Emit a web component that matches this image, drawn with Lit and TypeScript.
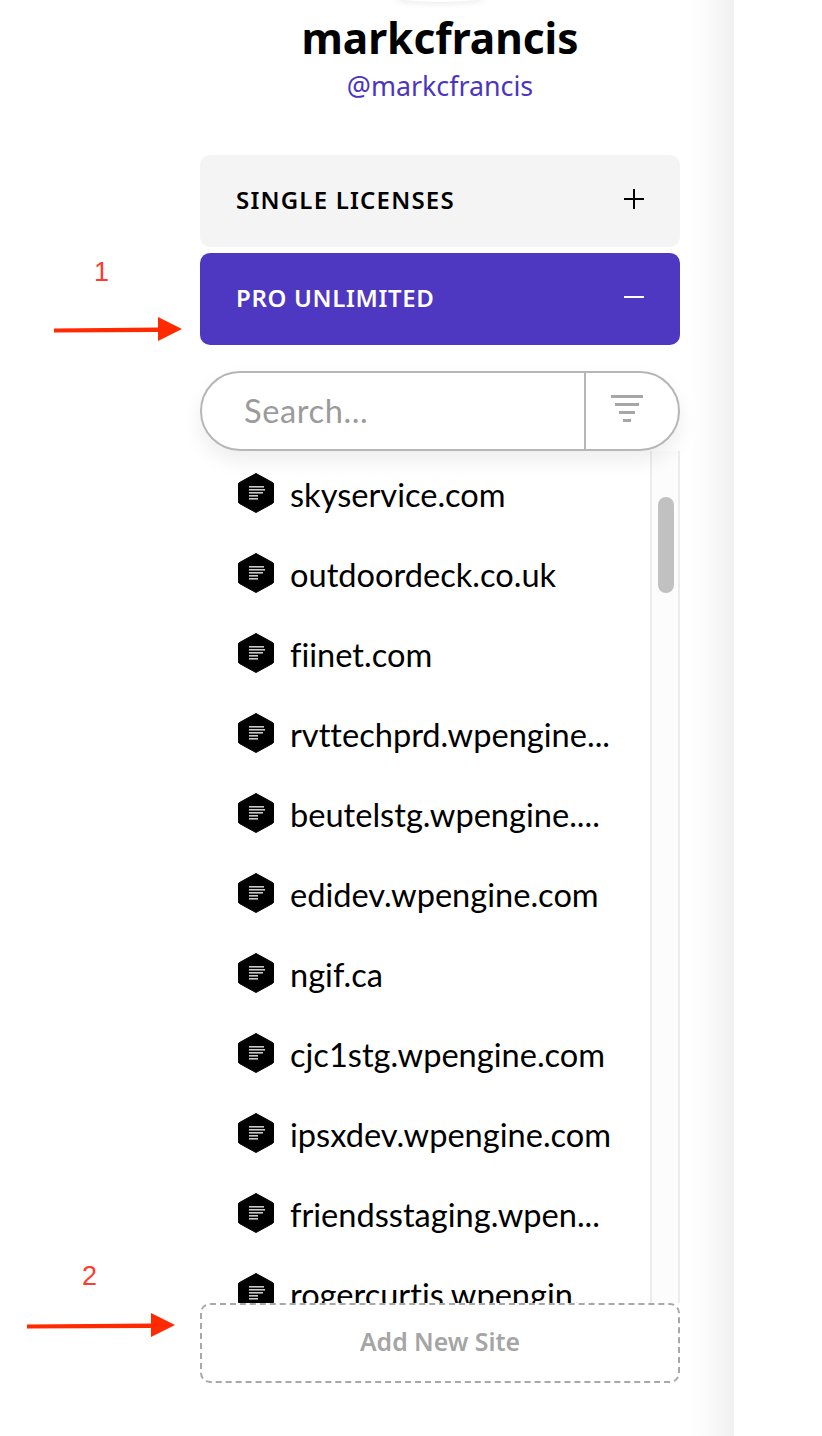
import { LitElement, html, css, svg } from "lit";
import { customElement } from "lit/decorators.js";

const SITES = [
  "skyservice.com",
  "outdoordeck.co.uk",
  "fiinet.com",
  "rvttechprd.wpengine...",
  "beutelstg.wpengine....",
  "edidev.wpengine.com",
  "ngif.ca",
  "cjc1stg.wpengine.com",
  "ipsxdev.wpengine.com",
  "friendsstaging.wpen...",
  "rogercurtis.wpengin...",
];

const siteIcon = html`<svg class="site-icon" width="36" height="42" viewBox="0 0 36 42">
  <path
    d="M18 1.5 L34.5 10.5 Q36 11.4 36 13 V29 Q36 30.6 34.5 31.5 L18 40.5 L1.5 31.5 Q0 30.6 0 29 V13 Q0 11.4 1.5 10.5 Z"
    fill="#000"
    stroke="#000"
    stroke-linejoin="round"
  />
  <g fill="#c9c9c9">
    <rect x="11" y="14" width="15" height="1.6" />
    <rect x="11" y="17" width="16" height="1.6" />
    <rect x="11" y="20" width="14" height="1.6" />
    <rect x="11" y="23" width="9" height="1.6" />
    <rect x="11" y="26" width="9" height="1.6" />
  </g>
</svg>`;

const arrow = (len: number) => svg`<svg class="arrow-svg" width=${len + 24} height="26" viewBox="0 0 ${len + 24} 26">
  <path d="M0 13.5 L${len} 12.5 V15 L0 15.5 Z" fill="#ff2a00" stroke="#ff2a00" stroke-width="2" />
  <path d="M${len} 1 L${len + 24} 13 L${len} 25 Z" fill="#ff2a00" />
</svg>`;

@customElement("app-root")
export class AppRoot extends LitElement {
  static styles = css`
    :host {
      display: block;
      background: #fff;
      font-family: "Noto Sans", sans-serif;
      color: #000;
    }

    .panel {
      position: relative;
      box-sizing: border-box;
      width: 734px;
      height: 1436px;
      padding: 0 54px 0 200px;
      overflow: hidden;
      background: linear-gradient(90deg, #fff 0, #fff 690px, #f8f8f8 715px, #f0f0f0 734px);
    }

    .top-shadow {
      position: absolute;
      left: 395px;
      top: -8px;
      width: 90px;
      height: 10px;
      border-radius: 50%;
      box-shadow: 0 2px 6px rgba(0, 0, 0, 0.08);
    }

    .title {
      box-sizing: border-box;
      margin: 0;
      height: 78px;
      padding-bottom: 2px;
      line-height: 76px;
      font-size: 42.4px;
      font-weight: 700;
      text-align: center;
    }

    .handle {
      height: 26px;
      line-height: 16px;
      font-size: 26.8px;
      text-align: center;
      color: #4b35c0;
    }

    .bar {
      box-sizing: border-box;
      display: flex;
      align-items: center;
      justify-content: space-between;
      height: 92px;
      padding: 0 36px 4px;
      border-radius: 10px;
      font-size: 24px;
      font-weight: 600;
      letter-spacing: 1.2px;
    }

    .bar.single {
      margin-top: 51px;
      background: #f4f4f4;
      color: #000;
    }

    .bar.pro {
      margin-top: 6px;
      background: #4e37c1;
      color: #fff;
      letter-spacing: 0.65px;
    }

    .bar svg {
      display: block;
    }

    .search {
      position: relative;
      z-index: 1;
      box-sizing: border-box;
      display: flex;
      height: 80px;
      margin-top: 26px;
      border: 2px solid #b6b6b6;
      border-radius: 40px;
      background: #fff;
      box-shadow: 0 10px 20px rgba(0, 0, 0, 0.07);
    }

    .search input {
      flex: 1;
      min-width: 0;
      padding: 0 0 2px 42px;
      border: 0;
      outline: 0;
      background: none;
      font-family: Lato, sans-serif;
      font-size: 32.6px;
      letter-spacing: 0.6px;
      color: #000;
    }

    .search input::placeholder {
      color: #9b9b9b;
      opacity: 1;
    }

    .filter {
      box-sizing: border-box;
      display: flex;
      flex-direction: column;
      align-items: center;
      justify-content: center;
      gap: 5px;
      width: 94px;
      padding: 0 10px 5px 0;
      border-left: 2px solid #b6b6b6;
    }

    .filter span {
      height: 3px;
      background: #a6a6a6;
    }

    .list-wrap {
      display: flex;
      height: 852px;
      overflow: hidden;
    }

    .list {
      flex: 1;
      margin: 0;
      padding: 4px 0 0 38px;
      list-style: none;
    }

    .list li {
      display: flex;
      align-items: center;
      gap: 16px;
      height: 80px;
      font-family: Lato, sans-serif;
      font-size: 32.6px;
      font-variant-ligatures: none;
      white-space: nowrap;
    }

    .list li span {
      padding-bottom: 2px;
    }

    .site-icon {
      flex: none;
      margin-bottom: 5px;
    }

    .track {
      box-sizing: border-box;
      flex: none;
      width: 30px;
      padding: 46px 4px 0 6px;
      border-left: 2px solid #ececec;
      border-right: 2px solid #ececec;
      background: #fcfcfc;
    }

    .thumb {
      height: 96px;
      border-radius: 8px;
      background: #c1c1c1;
    }

    .add {
      box-sizing: border-box;
      display: flex;
      align-items: center;
      justify-content: center;
      height: 80px;
      padding-bottom: 4px;
      border: 2px dashed #a8a8a8;
      border-radius: 10px;
      background: #fff;
      font-size: 24.8px;
      font-weight: 600;
      color: #a5a5a5;
    }

    .note {
      position: absolute;
      font-family: "Liberation Sans", sans-serif;
      font-size: 27px;
      line-height: 30px;
      color: #ff3b30;
    }

    .arrow-svg {
      position: absolute;
      display: block;
    }

    .arrow-one {
      left: 54px;
      top: 316px;
    }

    .arrow-two {
      left: 27px;
      top: 1312px;
    }
  `;

  render() {
    return html`
      <div class="panel">
        <div class="top-shadow"></div>
        <h1 class="title">markcfrancis</h1>
        <div class="handle">@markcfrancis</div>

        <div class="bar single">
          <span>SINGLE LICENSES</span>
          <svg width="20" height="20" viewBox="0 0 20 20">
            <path d="M0 10 H20 M10 0 V20" stroke="#000" stroke-width="2" />
          </svg>
        </div>
        <div class="bar pro">
          <span>PRO UNLIMITED</span>
          <svg width="20" height="20" viewBox="0 0 20 20">
            <path d="M0 10 H20" stroke="#fff" stroke-width="2" />
          </svg>
        </div>

        <div class="search">
          <input type="text" placeholder="Search..." />
          <div class="filter">
            <span style="width:32px"></span>
            <span style="width:24px"></span>
            <span style="width:16px"></span>
            <span style="width:8px"></span>
          </div>
        </div>

        <div class="list-wrap">
          <ul class="list">
            ${SITES.map((s) => html`<li>${siteIcon}<span>${s}</span></li>`)}
          </ul>
          <div class="track"><div class="thumb"></div></div>
        </div>

        <div class="add">Add New Site</div>

        <span class="note" style="left:94px;top:257px">1</span>
        <div class="arrow-one arrow-svg">${arrow(104)}</div>
        <span class="note" style="left:82px;top:1261px">2</span>
        <div class="arrow-two arrow-svg">${arrow(124)}</div>
      </div>
    `;
  }
}
